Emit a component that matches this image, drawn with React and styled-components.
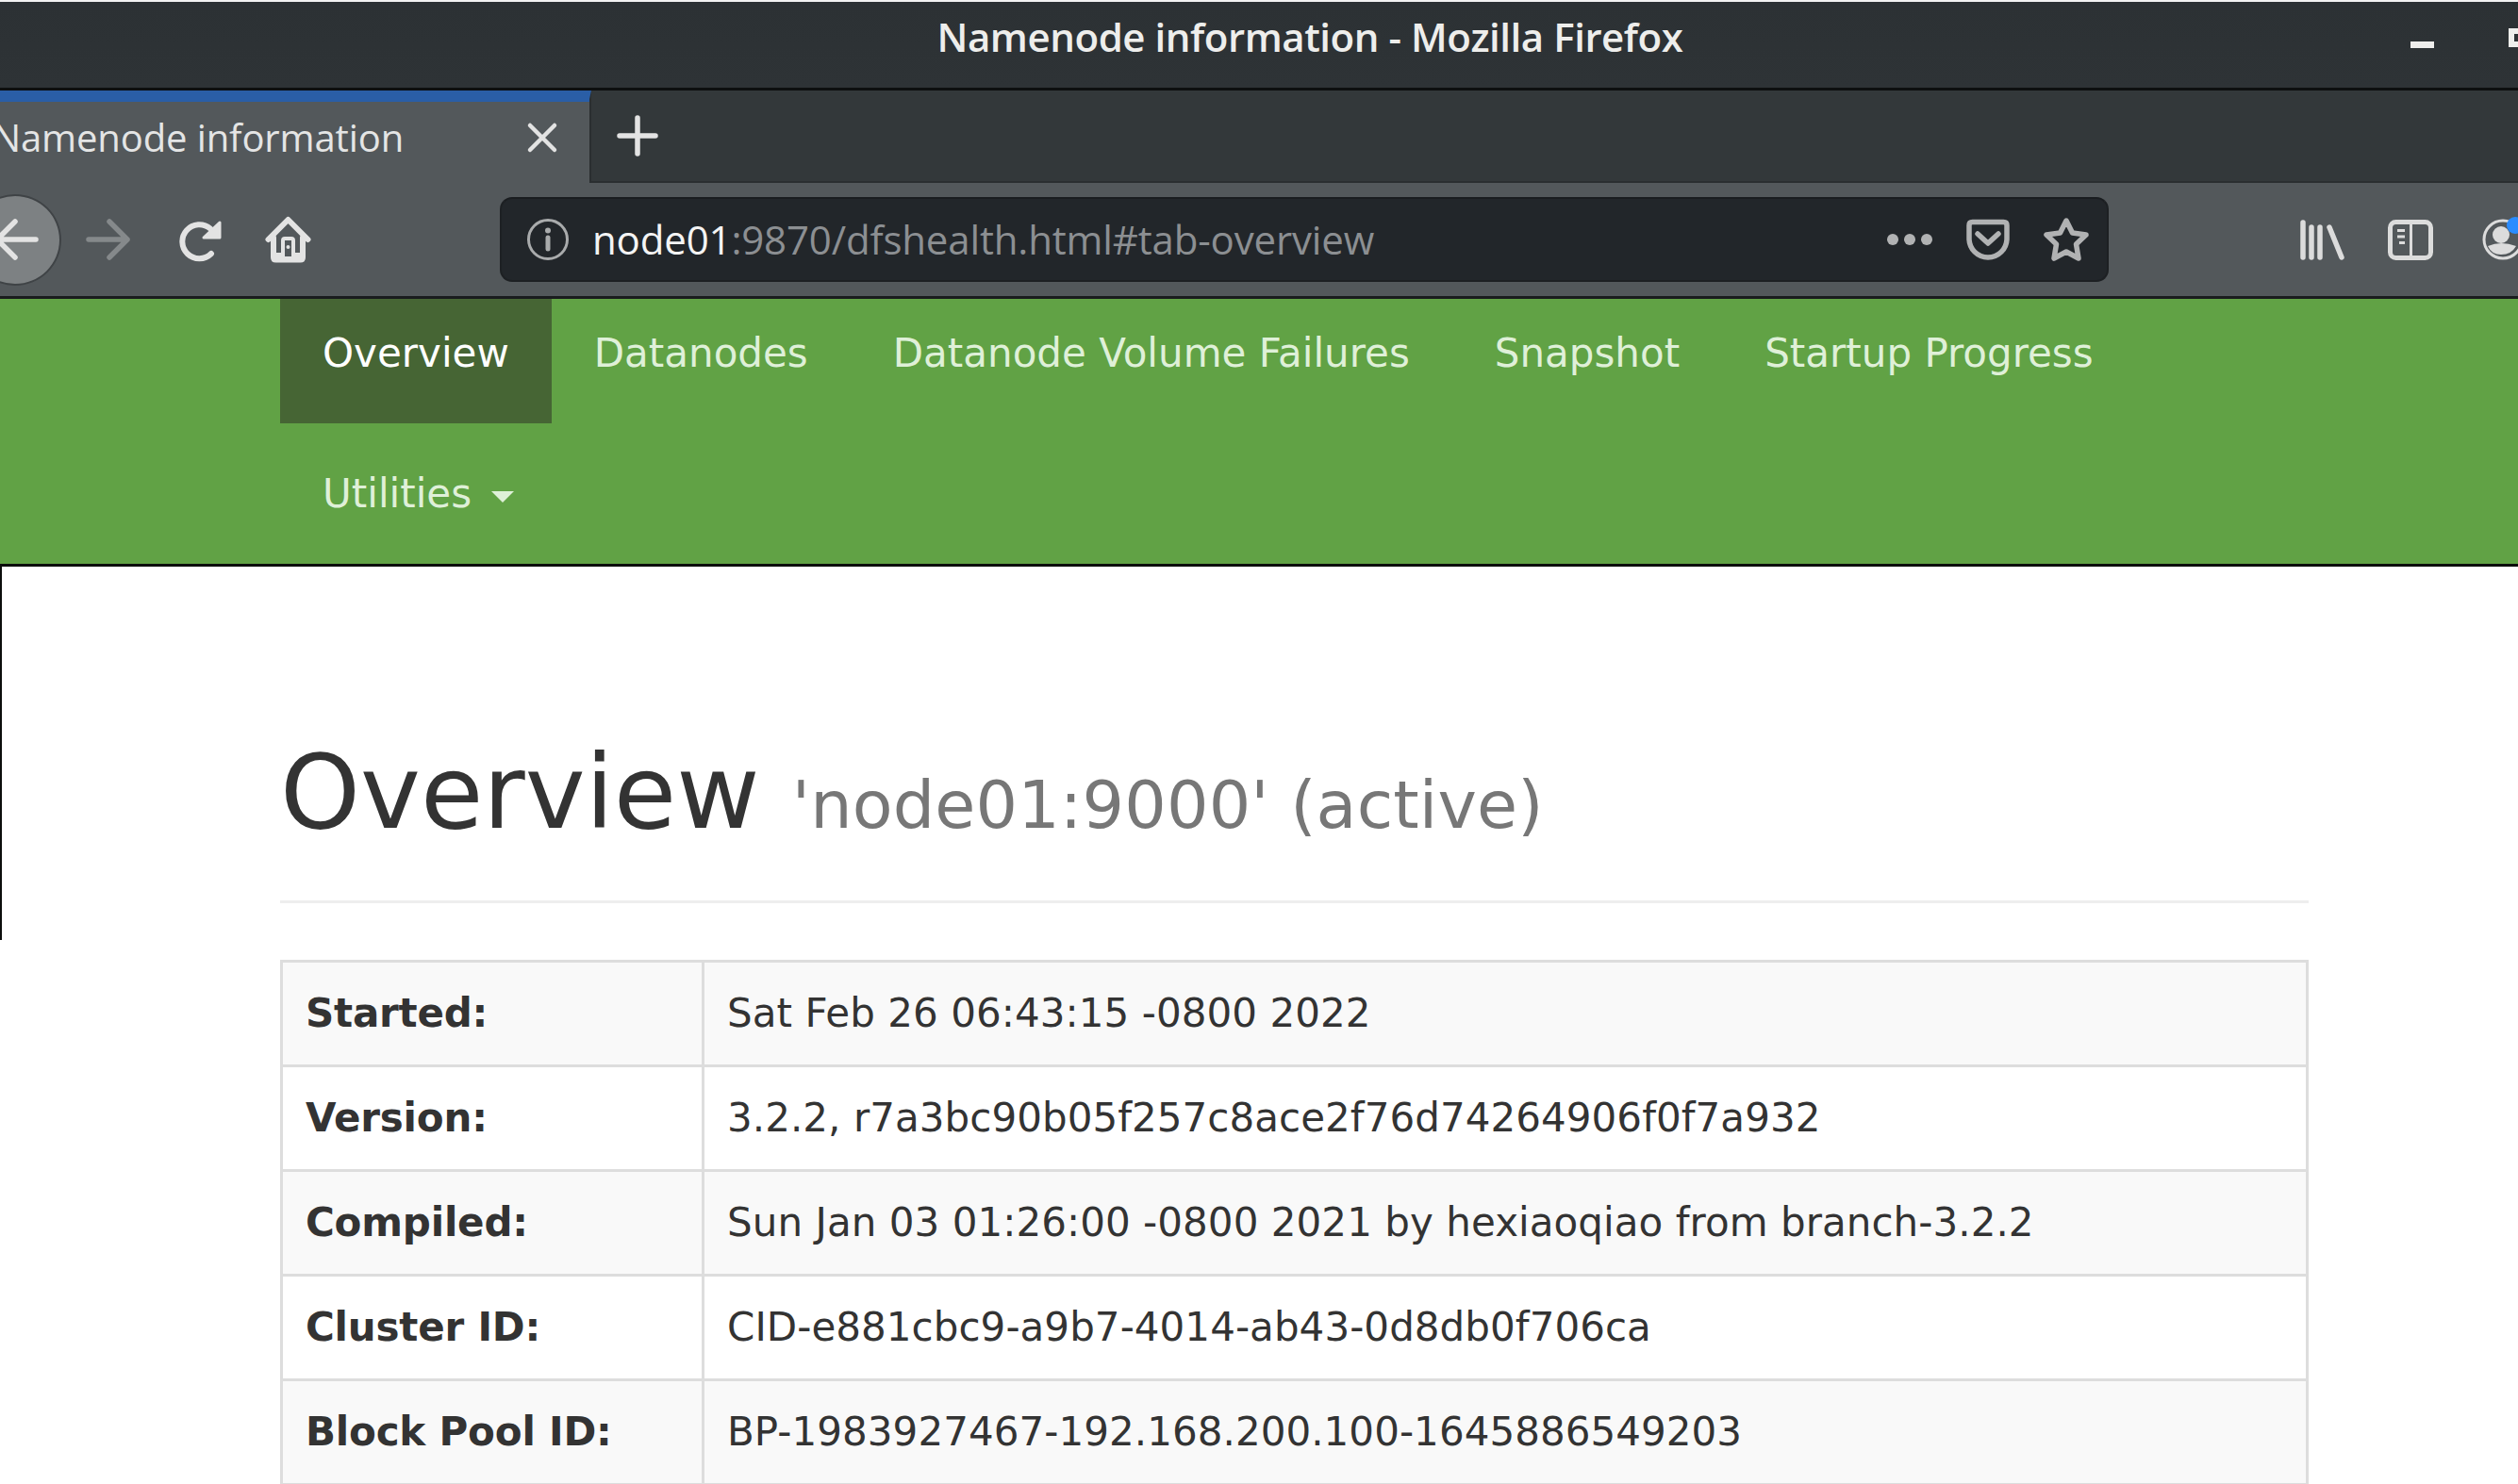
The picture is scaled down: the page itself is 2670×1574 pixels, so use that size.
import React from 'react';
import styled, { createGlobalStyle } from 'styled-components';

const Global = createGlobalStyle`
  html, body { margin: 0; padding: 0; background: #fff; }
  * { box-sizing: border-box; }
`;

const Page = styled.div`
  width: 2670px;
  height: 1574px;
  overflow: hidden;
  background: #fff;
  display: flex;
  flex-direction: column;
  border-top: 2px solid #f2f2f2;
`;

const TitleBar = styled.header`
  flex: none;
  height: 94px;
  background: linear-gradient(#2c3134, #2e3336);
  border-bottom: 3px solid #0d0f10;
  display: flex;
  align-items: center;
  position: relative;
  padding-bottom: 18px;
`;

const WindowTitle = styled.div`
  width: 2778px;
  text-align: center;
  font-family: "Open Sans", sans-serif;
  font-weight: 600;
  font-size: 42px;
  line-height: 50px;
  letter-spacing: -0.45px;
  color: #eeeeec;
  white-space: nowrap;
  flex: none;
`;

const MinButton = styled.span`
  position: absolute;
  left: 2556px;
  top: 42px;
  width: 25px;
  height: 7px;
  background: #eeeeec;
`;

const MaxButton = styled.span`
  position: absolute;
  left: 2660px;
  top: 28px;
  width: 24px;
  height: 20px;
  border: 6px solid #eeeeec;
`;

const TabStrip = styled.div`
  flex: none;
  height: 98px;
  background: #33383a;
  border-bottom: 2px solid #2a2e30;
  display: flex;
  align-items: stretch;
`;

const Tab = styled.div`
  flex: none;
  width: 627px;
  margin-bottom: -2px;
  background: #53585b;
  border-top: 9px solid #2a5ea6;
  box-shadow: inset 0 3px 0 #2a5ea6;
  border-right: 2px solid #2a2e30;
  display: flex;
  align-items: center;
  justify-content: space-between;
  padding: 0 35px 8px 0;
  overflow: hidden;
`;

const TabTitle = styled.span`
  font-family: "Open Sans", sans-serif;
  font-size: 40px;
  line-height: 50px;
  letter-spacing: -0.12px;
  color: #e4e5e5;
  white-space: nowrap;
  margin-left: -8px;
`;

const Glyph = styled.svg`
  flex: none;
  display: block;
  width: ${p => p.$size || 48}px;
  height: ${p => p.$size || 48}px;
  margin-left: ${p => p.$ml || 0}px;
  overflow: visible;
`;

const NewTab = styled.div`
  flex: none;
  display: flex;
  align-items: center;
  padding: 0 0 0 28px;
`;

const Toolbar = styled.div`
  flex: none;
  height: 123px;
  background: #53585b;
  border-bottom: 3px solid #1a1c1e;
  display: flex;
  align-items: center;
`;

const BackCircle = styled.div`
  flex: none;
  width: 98px;
  height: 97px;
  margin-left: -33px;
  border-radius: 50%;
  background: #7d8183;
  border: 2px solid #3f4346;
  display: flex;
  align-items: center;
  justify-content: center;
`;

const UrlBar = styled.div`
  flex: none;
  width: 1706px;
  height: 90px;
  margin-left: 200px;
  background: #22262a;
  border: 2px solid #1d2023;
  border-top-color: #1a1d20;
  border-radius: 13px;
  display: flex;
  align-items: center;
  padding: 0 19px 0 25px;
`;

const UrlText = styled.div`
  margin-left: 23px;
  font-family: "Open Sans", sans-serif;
  font-size: 42px;
  line-height: 50px;
  letter-spacing: -0.16px;
  white-space: nowrap;
  color: #8c8f92;
`;

const UrlHost = styled.span`
  color: #f4f4f4;
`;

const UrlActions = styled.div`
  margin-left: auto;
  display: flex;
  align-items: center;
  gap: 35px;
`;

const NavBar = styled.nav`
  flex: none;
  height: 284px;
  background: #61a245;
  border-bottom: 3px solid #0c0e0c;
  padding-left: 297px;
`;

const NavList = styled.ul`
  list-style: none;
  margin: 0;
  padding: 0;
  width: 2151px;
  display: flex;
  flex-wrap: wrap;
`;

const NavItem = styled.li`
  flex: none;
  padding: ${p => (p.$second ? '45px' : '28px')} 45px 44px;
  font-family: "DejaVu Sans", sans-serif;
  font-size: 42px;
  line-height: 60px;
  color: ${p => (p.$active ? '#ffffff' : '#dff0d8')};
  background: ${p => (p.$active ? '#466534' : 'transparent')};
  white-space: nowrap;
`;

const Caret = styled.span`
  display: inline-block;
  width: 0;
  height: 0;
  margin-left: 21px;
  vertical-align: middle;
  border-top: 12px solid #dff0d8;
  border-left: 12px solid transparent;
  border-right: 12px solid transparent;
`;

const Content = styled.main`
  position: relative;
  flex: 1;
  padding-left: 297px;
  width: 2448px;
  box-sizing: content-box;
  font-family: "DejaVu Sans", sans-serif;
  color: #333;

  &::before {
    content: "";
    position: absolute;
    left: 0;
    top: 0;
    width: 2px;
    height: 396px;
    background: #0c0e0c;
  }
`;

const PageHeader = styled.div`
  width: 2151px;
  margin-top: 180px;
  padding-bottom: 41px;
  border-bottom: 3px solid #eee;
  margin-bottom: 60px;
`;

const Heading = styled.h1`
  margin: 0;
  font-size: 108px;
  font-weight: 400;
  line-height: 119px;
  color: #333;
  white-space: nowrap;
`;

const HeadingNote = styled.small`
  font-size: 70px;
  letter-spacing: 0.15px;
  color: #777;
`;

const InfoTable = styled.table`
  width: 2151px;
  table-layout: fixed;
  border-collapse: collapse;
  font-size: 42px;
  line-height: 60px;
  letter-spacing: 0.05px;
`;

const Row = styled.tr`
  background: ${p => (p.$striped ? '#f9f9f9' : '#fff')};
`;

const KeyCell = styled.th`
  width: 447px;
  padding: 24px;
  border: 3px solid #ddd;
  text-align: left;
  font-weight: 700;
  letter-spacing: -0.2px;
  white-space: nowrap;
`;

const ValueCell = styled.td`
  padding: 24px;
  border: 3px solid #ddd;
  white-space: nowrap;
`;

const Line = ({ d, color = '#e3e3e3', w = 5.5 }) => (
  <path d={d} fill="none" stroke={color} strokeWidth={w} strokeLinecap="round" strokeLinejoin="round" />
);

const rows = [
  ['Started:', 'Sat Feb 26 06:43:15 -0800 2022'],
  ['Version:', '3.2.2, r7a3bc90b05f257c8ace2f76d74264906f0f7a932'],
  ['Compiled:', 'Sun Jan 03 01:26:00 -0800 2021 by hexiaoqiao from branch-3.2.2'],
  ['Cluster ID:', 'CID-e881cbc9-a9b7-4014-ab43-0d8db0f706ca'],
  ['Block Pool ID:', 'BP-1983927467-192.168.200.100-1645886549203'],
];

const navItems = ['Overview', 'Datanodes', 'Datanode Volume Failures', 'Snapshot', 'Startup Progress'];

export default function App() {
  return (
    <Page>
      <Global />
      <TitleBar>
        <WindowTitle>Namenode information - Mozilla Firefox</WindowTitle>
        <MinButton />
        <MaxButton />
      </TitleBar>
      <TabStrip>
        <Tab>
          <TabTitle>Namenode information</TabTitle>
          <Glyph viewBox="0 0 30 30" $size={30}>
            <Line d="M2 2 L28 28 M28 2 L2 28" w={4.5} />
          </Glyph>
        </Tab>
        <NewTab>
          <Glyph viewBox="0 0 42 42" $size={42}>
            <Line d="M21 2 V40 M2 21 H40" />
          </Glyph>
        </NewTab>
      </TabStrip>
      <Toolbar>
        <BackCircle>
          <Glyph viewBox="0 0 48 48">
            <Line d="M46 24 H5 M24 5 L5 24 L24 43" />
          </Glyph>
        </BackCircle>
        <Glyph viewBox="0 0 48 48" $ml={26}>
          <Line d="M3 24 H44 M25 5 L44 24 L25 43" color="#85898b" />
        </Glyph>
        <Glyph viewBox="0 0 48 48" $ml={48}>
          <Line d="M37 39 A18 18 0 1 1 36 12.5" w={6} />
          <path d="M46 6 V22 H29 Z" fill="#e3e3e3" stroke="#e3e3e3" strokeWidth="3" strokeLinejoin="round" />
        </Glyph>
        <Glyph viewBox="0 0 48 48" $ml={47}>
          <Line d="M2.5 24 L23.5 3 L44.5 24" w={6} />
          <Line d="M8 22 V43 Q8 45.5 10.5 45.5 H36.5 Q39 45.5 39 43 V22" w={6} />
          <Line d="M18 44 V25 Q18 23 20 23 H27 Q29 23 29 25 V44 Z" w={4} />
          <path d="M8 38 H18 V46 H8 Z M29 38 H39 V46 H29 Z" fill="#e3e3e3" />
          <path d="M18 42 H29 V46 H18 Z" fill="#e3e3e3" />
          <circle cx="23.5" cy="32" r="2" fill="#e3e3e3" />
        </Glyph>
        <UrlBar>
          <Glyph viewBox="0 0 48 48">
            <circle cx="24" cy="24" r="20.5" fill="none" stroke="#a9abac" strokeWidth="3" />
            <circle cx="24" cy="14.5" r="3" fill="#a9abac" />
            <Line d="M24 22 V34" color="#a9abac" w={5} />
          </Glyph>
          <UrlText>
            <UrlHost>node01</UrlHost>:9870/dfshealth.html#tab-overview
          </UrlText>
          <UrlActions>
            <Glyph viewBox="0 0 48 48">
              <circle cx="6" cy="24" r="6" fill="#b1b2b3" />
              <circle cx="24" cy="24" r="6" fill="#b1b2b3" />
              <circle cx="42" cy="24" r="6" fill="#b1b2b3" />
            </Glyph>
            <Glyph viewBox="0 0 48 48">
              <Line d="M4 9 Q4 5.5 7.5 5.5 H40.5 Q44 5.5 44 9 V23 A20 20 0 0 1 4 23 Z" color="#b1b2b3" />
              <Line d="M13 18 L24 28 L35 18" color="#b1b2b3" />
            </Glyph>
            <Glyph viewBox="0 0 48 48">
              <path
                d="M24 4 L30.5 17 L45 19 L34.5 29 L37 44 L24 37 L11 44 L13.5 29 L3 19 L17.5 17 Z"
                fill="none"
                stroke="#b1b2b3"
                strokeWidth="5.5"
                strokeLinejoin="round"
              />
            </Glyph>
          </UrlActions>
        </UrlBar>
        <Glyph viewBox="0 0 48 48" $ml={203}>
          <Line d="M3 6 V43 M12 11 V43 M21 11 V43 M31 11 L44 43" color="#dcdcdc" />
        </Glyph>
        <Glyph viewBox="0 0 48 48" $ml={45}>
          <rect x="2.5" y="5.5" width="43" height="38" rx="6" fill="none" stroke="#dcdcdc" strokeWidth="5" />
          <path d="M23 5 H26 V44 H23 Z M10 13 H18 V16 H10 Z M10 19.5 H18 V22.5 H10 Z M12 26 H18 V29 H12 Z" fill="#dcdcdc" />
        </Glyph>
        <Glyph viewBox="0 0 48 48" $ml={51}>
          <circle cx="23" cy="24" r="20" fill="none" stroke="#dcdcdc" strokeWidth="3" />
          <circle cx="21" cy="19" r="9" fill="#dcdcdc" />
          <path d="M7 31 Q21 25 37 31 Q32 40 21 40 Q11 40 7 31 Z" fill="#dcdcdc" />
          <circle cx="36" cy="9" r="9" fill="#2a8cff" />
        </Glyph>
      </Toolbar>
      <NavBar>
        <NavList>
          {navItems.map((item, i) => (
            <NavItem key={item} $active={i === 0}>
              {item}
            </NavItem>
          ))}
          <NavItem $second>
            Utilities
            <Caret />
          </NavItem>
        </NavList>
      </NavBar>
      <Content>
        <PageHeader>
          <Heading>
            Overview <HeadingNote>'node01:9000' (active)</HeadingNote>
          </Heading>
        </PageHeader>
        <InfoTable>
          <tbody>
            {rows.map(([k, v], i) => (
              <Row key={k} $striped={i % 2 === 0}>
                <KeyCell>{k}</KeyCell>
                <ValueCell>{v}</ValueCell>
              </Row>
            ))}
          </tbody>
        </InfoTable>
      </Content>
    </Page>
  );
}
